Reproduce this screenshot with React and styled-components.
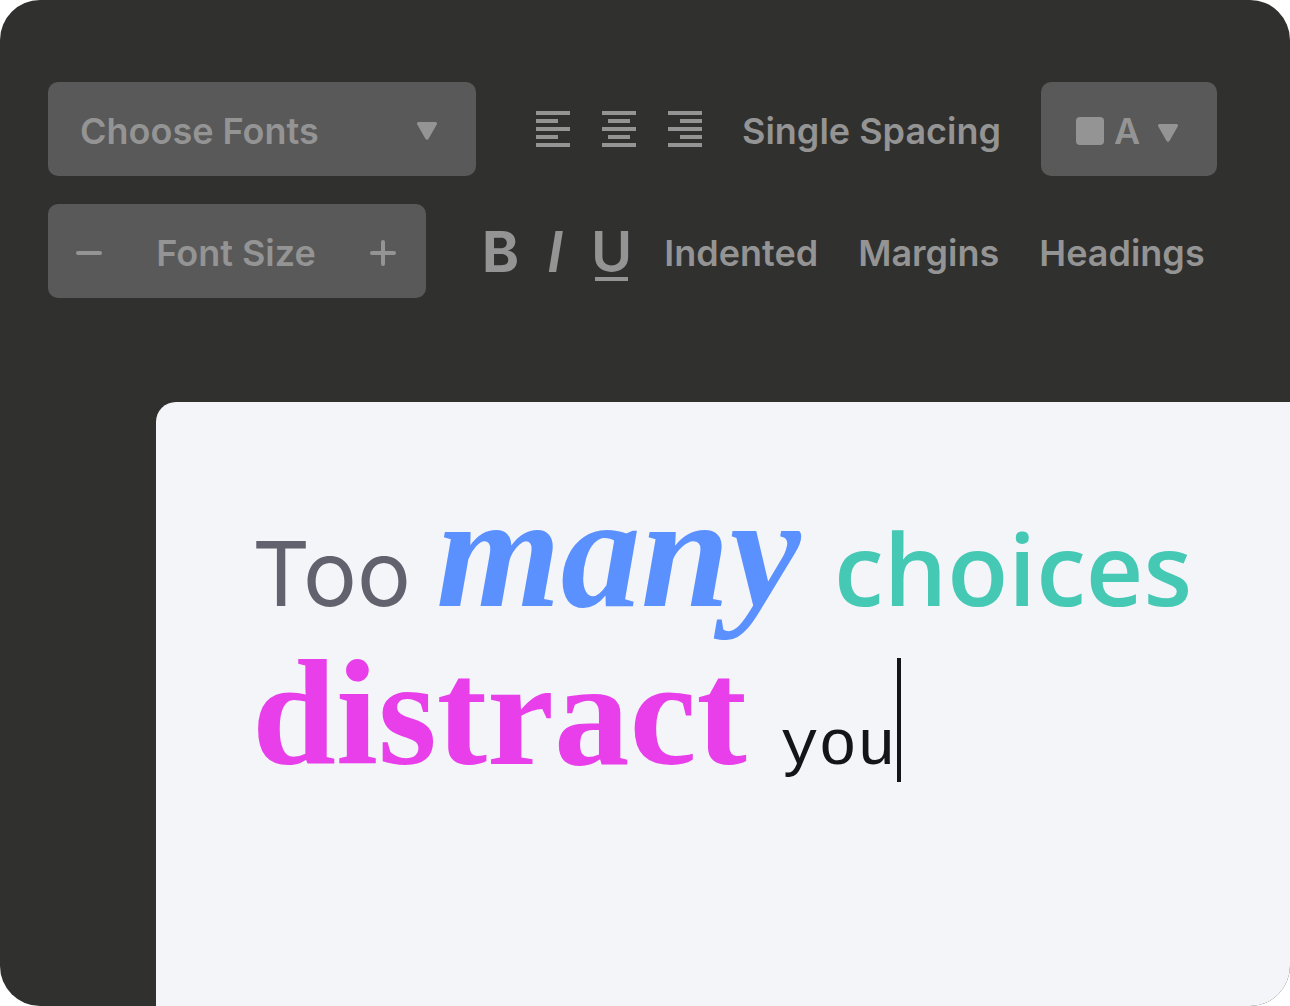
import React from "react";
import styled, { createGlobalStyle } from "styled-components";

const ink = "#949494";
const panel = "#595959";

const GlobalStyle = createGlobalStyle`
  * { box-sizing: border-box; }
  body { margin: 0; background: #ffffff; }
  button, select { font: inherit; color: inherit; }
`;

const Shell = styled.main`
  display: flex;
  flex-direction: column;
  gap: 104px;
  min-height: 100vh;
  padding-top: 82px;
  overflow: hidden;
  border-radius: 40px;
  background: #30302e;
  font-family: Inter, "Liberation Sans", sans-serif;
`;

const Toolbar = styled.div`
  display: flex;
  flex-direction: column;
  gap: 28px;
  padding: 0 48px;
  color: ${ink};
  font-size: 36px;
  font-weight: 600;
  line-height: 44px;
`;

const Row = styled.div`
  display: flex;
  align-items: center;
  gap: ${(p) => p.$gap}px;
  height: 94px;
`;

const SelectBox = styled.label`
  display: grid;
  align-items: center;
  width: 428px;
  height: 94px;
  border-radius: 10px;
  background: ${panel};

  > * { grid-area: 1 / 1; }
  > svg { justify-self: end; margin-right: 39px; margin-top: 4px; pointer-events: none; }
`;

const FontSelect = styled.select`
  appearance: none;
  width: 100%;
  height: 94px;
  padding: 4px 80px 0 32px;
  border: 0;
  border-radius: 10px;
  background: transparent;
`;

const Group = styled.div`
  display: flex;
  align-items: center;
  gap: ${(p) => p.$gap}px;
  padding-left: ${(p) => p.$inset || 0}px;
`;

const IconButton = styled.button`
  display: flex;
  align-items: center;
  justify-content: center;
  padding: 0;
  border: 0;
  background: none;
`;

const TextButton = styled.button`
  padding: 4px 0 0;
  border: 0;
  background: none;
  white-space: nowrap;
`;

const ColorButton = styled.button`
  display: flex;
  align-items: center;
  justify-content: center;
  width: 176px;
  height: 94px;
  padding: 4px 4px 0 0;
  border: 0;
  border-radius: 10px;
  background: ${panel};
  gap: 10px;

  > svg { margin-left: 8px; margin-top: 4px; }
`;

const Swatch = styled.span`
  width: 28px;
  height: 28px;
  border-radius: 4px;
  background: ${ink};
`;

const Stepper = styled.div`
  display: flex;
  align-items: center;
  justify-content: space-between;
  width: 378px;
  height: 94px;
  padding: 4px 30px 0 28px;
  border-radius: 10px;
  background: ${panel};
`;

const StyleButton = styled.button`
  min-width: 32px;
  padding: 6px 0 0;
  border: 0;
  background: none;
  font-size: 56px;
  font-weight: ${(p) => (p.$bold ? 700 : 600)};
  font-style: ${(p) => (p.$italic ? "italic" : "normal")};
  line-height: 50px;
  text-align: center;

  &::after {
    content: "";
    display: block;
    height: 4px;
    margin: 0 4px;
    background: ${(p) => (p.$underline ? ink : "transparent")};
  }
`;

const Page = styled.section`
  flex: 1;
  margin-left: 156px;
  padding: 93px 24px 93px 96px;
  border-top-left-radius: 20px;
  background: #f3f5f9;
`;

const Copy = styled.p`
  margin: 0;
  color: #62626e;
  font-size: 90px;
  font-weight: 400;
  line-height: 158px;
`;

const Word = styled.span`
  margin-right: 8px;
  color: ${(p) => p.$color};
  font-family: ${(p) => p.$family};
  font-size: ${(p) => p.$size}px;
  font-weight: ${(p) => p.$weight || 400};
  font-style: ${(p) => (p.$italic ? "italic" : "normal")};
  line-height: 0;
`;

const Caret = styled.span`
  display: inline-block;
  width: 4px;
  height: 124px;
  margin-left: 2px;
  vertical-align: -18px;
  background: #141518;
`;

const Arrow = () => (
  <svg width="20" height="18" viewBox="0 0 20 18" aria-hidden="true">
    <path d="M2 0H18Q21 0 19.6 2.8L11.6 16.8Q10 19 8.4 16.8L.4 2.8Q-1 0 2 0Z" fill={ink} />
  </svg>
);

const AlignIcon = ({ inset }) => (
  <svg width="34" height="36" viewBox="0 0 34 36" fill={ink} aria-hidden="true">
    {[0, 8, 16, 24, 32].map((y, i) => (
      <rect key={y} x={i % 2 ? inset : 0} y={y} width={i % 2 ? 22 : 34} height="4" />
    ))}
  </svg>
);

const SignIcon = ({ plus }) => (
  <svg width="26" height="26" viewBox="0 0 26 26" fill={ink} aria-hidden="true">
    <rect y="11" width="26" height="4" rx="2" />
    {plus && <rect x="11" width="4" height="26" rx="2" />}
  </svg>
);

const alignments = [
  { name: "Align left", inset: 0 },
  { name: "Align center", inset: 6 },
  { name: "Align right", inset: 12 },
];

export default function App() {
  return (
    <>
      <GlobalStyle />
      <Shell>
        <Toolbar role="toolbar" aria-label="Formatting">
          <Row $gap={40}>
            <SelectBox>
              <FontSelect aria-label="Font">
                <option>Choose Fonts</option>
              </FontSelect>
              <Arrow />
            </SelectBox>
            <Group $gap={32} $inset={20}>
              {alignments.map((a) => (
                <IconButton key={a.name} type="button" aria-label={a.name}>
                  <AlignIcon inset={a.inset} />
                </IconButton>
              ))}
            </Group>
            <TextButton type="button">Single Spacing</TextButton>
            <ColorButton type="button" aria-haspopup="listbox">
              <Swatch />A
              <Arrow />
            </ColorButton>
          </Row>
          <Row $gap={32}>
            <Stepper role="group" aria-label="Font size">
              <IconButton type="button" aria-label="Decrease">
                <SignIcon />
              </IconButton>
              <span>Font Size</span>
              <IconButton type="button" aria-label="Increase">
                <SignIcon plus />
              </IconButton>
            </Stepper>
            <Group $gap={20} $inset={24}>
              <StyleButton type="button" $bold>B</StyleButton>
              <StyleButton type="button" $italic>I</StyleButton>
              <StyleButton type="button" $underline>U</StyleButton>
            </Group>
            <Group $gap={40}>
              <TextButton type="button">Indented</TextButton>
              <TextButton type="button">Margins</TextButton>
              <TextButton type="button">Headings</TextButton>
            </Group>
          </Row>
        </Toolbar>
        <Page>
          <Copy>
            Too{" "}
            <Word $color="#5b91ff" $family={'"Liberation Serif", serif'} $size={160} $weight={700} $italic>
              many
            </Word>{" "}
            <Word $color="#45c8b4" $family={'"Comic Sans MS", "Open Sans", sans-serif'} $size={100} $weight={600}>
              choices
            </Word>
            <br />
            <Word $color="#e83fea" $family={'"Liberation Serif", serif'} $size={151} $weight={700}>
              distract
            </Word>{" "}
            <Word $color="#141518" $family={'"Courier New", "Liberation Mono", monospace'} $size={64}>
              you
              <Caret />
            </Word>
          </Copy>
        </Page>
      </Shell>
    </>
  );
}
